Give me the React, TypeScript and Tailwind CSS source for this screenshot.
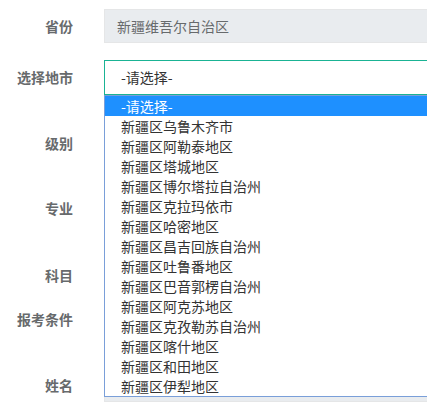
import React from 'react';

const cities = [
  '新疆区乌鲁木齐市',
  '新疆区阿勒泰地区',
  '新疆区塔城地区',
  '新疆区博尔塔拉自治州',
  '新疆区克拉玛依市',
  '新疆区哈密地区',
  '新疆区昌吉回族自治州',
  '新疆区吐鲁番地区',
  '新疆区巴音郭楞自治州',
  '新疆区阿克苏地区',
  '新疆区克孜勒苏自治州',
  '新疆区喀什地区',
  '新疆区和田地区',
  '新疆区伊犁地区',
];

const font = { fontFamily: '"Noto Sans CJK SC", "Noto Sans", sans-serif' };

const Row = ({ label, className, children }: { label: string; className: string; children?: React.ReactNode }) => (
  <div className={`flex items-center ${className}`}>
    <label className="w-[73px] shrink-0 text-right text-[14px] font-bold text-[#676a6c]">{label}</label>
    <div className="ml-[31px] w-[360px] shrink-0">{children}</div>
  </div>
);

const Input = ({ gray }: { gray?: boolean }) => (
  <div className={`h-[34px] border border-[#e5e6e7] ${gray ? 'bg-[#e9ecef]' : 'bg-white'}`} />
);

export default function App() {
  return (
    <div className="relative w-[427px] h-[412px] overflow-hidden bg-white" style={font}>
      <div className="flex flex-col">
        <Row label="省份" className="mt-[9px]">
          <div className="h-[34px] flex items-center pl-[12px] border border-[#e5e6e7] bg-[#e9ecef] text-[14px] text-[#676a6c]">
            新疆维吾尔自治区
          </div>
        </Row>
        <Row label="选择地市" className="mt-[17px]">
          <div className="h-[35px] flex items-center pl-[16px] border border-[#1ab394] bg-white text-[14px] text-[#333]">
            -请选择-
          </div>
        </Row>
        <Row label="级别" className="mt-[31px]">
          <Input />
        </Row>
        <Row label="专业" className="mt-[31px]">
          <Input />
        </Row>
        <Row label="科目" className="mt-[33px]">
          <Input />
        </Row>
        <Row label="报考条件" className="mt-[10px]">
          <Input />
        </Row>
        <Row label="姓名" className="mt-[32px]">
          <Input gray />
        </Row>
      </div>

      {/* open select list */}
      <ul className="absolute left-[104px] top-[95px] w-[360px] border border-[#7a9fd9] bg-white text-[14px] leading-[20px] text-[#333]">
        <li className="h-[20px] pl-[16px] bg-[#1e90ff] text-white">-请选择-</li>
        {cities.map((c) => (
          <li key={c} className="h-[20px] pl-[16px]">{c}</li>
        ))}
      </ul>
    </div>
  );
}
